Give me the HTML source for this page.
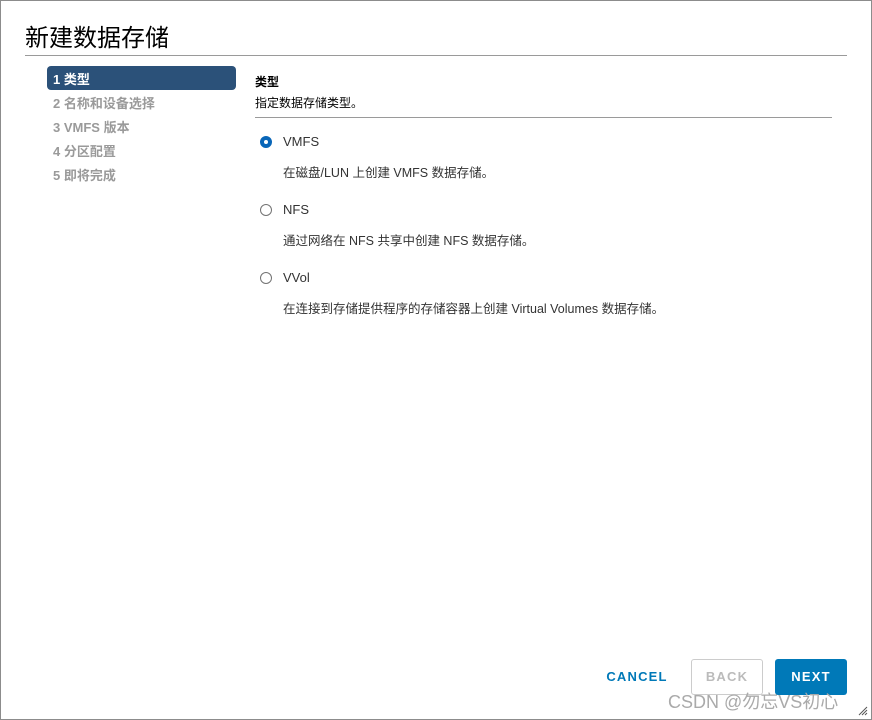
<!DOCTYPE html>
<html><head><meta charset="utf-8"><style>
body{margin:0;width:872px;height:720px;background:#fff;font-family:"Liberation Sans","Noto Sans CJK SC",sans-serif;position:relative;overflow:hidden}
.frame{position:absolute;left:0;top:0;width:870px;height:718px;border:1px solid #8c8c8c}
.t{position:absolute;white-space:nowrap}
h1{position:absolute;left:25px;top:23px;margin:0;font-weight:normal;font-size:24px;color:#000;line-height:32px}
.hr1{position:absolute;left:25px;top:55px;width:822px;height:1px;background:#9a9a9a}
.sel{position:absolute;left:47px;top:66px;width:189px;height:24px;background:#2b5179;border-radius:4px}
.nav{font-size:13px;font-weight:bold;color:#9a9a9a;left:53px}
.radio{position:absolute;width:10px;height:10px;border:1px solid #737373;border-radius:50%;background:#fff}
.radio.on{border:4px solid #0966b8;width:4px;height:4px}
.btn{position:absolute;top:659px;height:36px;font-size:13px;font-weight:bold;letter-spacing:1.2px;text-align:center;line-height:36px;border-radius:3px}
</style></head><body>
<div class="frame"></div>
<h1>新建数据存储</h1>
<div class="hr1"></div>
<div class="sel"></div>
<div class="t nav" style="top:69px;color:#fff">1 类型</div>
<div class="t nav" style="top:93px">2 名称和设备选择</div>
<div class="t nav" style="top:117px">3 VMFS 版本</div>
<div class="t nav" style="top:141px">4 分区配置</div>
<div class="t nav" style="top:165px">5 即将完成</div>
<div class="t" style="left:255px;top:73px;font-size:12px;font-weight:bold">类型</div>
<div class="t" style="left:255px;top:94px;font-size:12px">指定数据存储类型。</div>
<div style="position:absolute;left:255px;top:117px;width:577px;height:1px;background:#9a9a9a"></div>
<div class="radio on" style="left:260px;top:136px"></div>
<div class="t" style="left:283px;top:134px;font-size:13px;color:#333">VMFS</div>
<div class="t" style="left:283px;top:162px;font-size:12.5px;color:#333">在磁盘/LUN 上创建 VMFS 数据存储。</div>
<div class="radio" style="left:260px;top:204px"></div>
<div class="t" style="left:283px;top:202px;font-size:13px;color:#333">NFS</div>
<div class="t" style="left:283px;top:230px;font-size:12.5px;color:#333">通过网络在 NFS 共享中创建 NFS 数据存储。</div>
<div class="radio" style="left:260px;top:272px"></div>
<div class="t" style="left:283px;top:270px;font-size:13px;color:#333">VVol</div>
<div class="t" style="left:283px;top:298px;font-size:12.5px;color:#333">在连接到存储提供程序的存储容器上创建 Virtual Volumes 数据存储。</div>
<div class="btn" style="left:601px;width:72px;color:#0079b8">CANCEL</div>
<div class="btn" style="left:691px;width:70px;border:1px solid #ccc;color:#bbb;height:34px;line-height:34px">BACK</div>
<div class="btn" style="left:775px;width:72px;background:#0079b8;color:#fff">NEXT</div>
<div class="t" style="left:668px;top:688px;font-size:18px;color:#aaa">CSDN @勿忘VS初心</div>
<svg style="position:absolute;left:858px;top:706px" width="10" height="10"><path d="M9 1L1 9M9 4L4 9M9 7L7 9" stroke="#555" stroke-width="1"/></svg>
</body></html>
